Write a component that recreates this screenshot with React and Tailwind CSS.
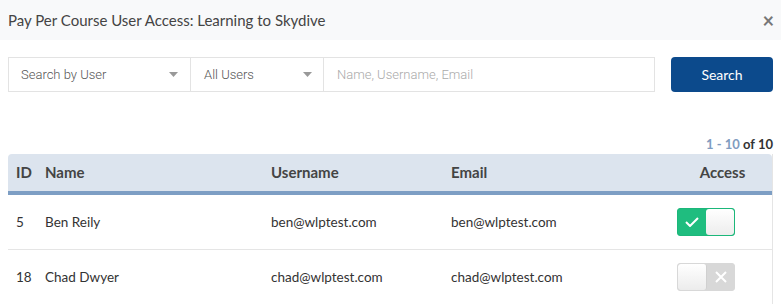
import { useState } from "react";

const users = [
  { id: 5, name: "Ben Reily", username: "ben@wlptest.com", email: "ben@wlptest.com", access: true },
  { id: 18, name: "Chad Dwyer", username: "chad@wlptest.com", email: "chad@wlptest.com", access: false },
];

function Caret() {
  return (
    <svg width="9" height="5" viewBox="0 0 9 5" className="fill-[#999]">
      <path d="M0 0h9L4.5 5z" />
    </svg>
  );
}

function Toggle({ on, onClick }) {
  return (
    <button
      onClick={onClick}
      className={`flex h-[28px] w-[58px] rounded-[3px] border overflow-hidden ${
        on ? "border-[#1cb77a] bg-[#1fbd7f]" : "border-[#d8d8d8] bg-[#d8d8d8]"
      }`}
    >
      {on ? (
        <>
          <span className="flex h-full w-[28px] items-center justify-center">
            <svg width="14" height="10" viewBox="0 0 14 10" fill="none" stroke="white" strokeWidth="2">
              <path d="M1 5l4 4 8-8" />
            </svg>
          </span>
          <span className="h-full flex-1 rounded-[3px] bg-gradient-to-b from-white to-[#ededed]" />
        </>
      ) : (
        <>
          <span className="h-full w-[29px] rounded-[3px] bg-gradient-to-b from-white to-[#ececec] border-r border-[#d0d0d0]" />
          <span className="flex h-full flex-1 items-center justify-center">
            <svg width="12" height="12" viewBox="0 0 12 12" stroke="white" strokeWidth="2">
              <path d="M1 1l10 10M11 1L1 11" />
            </svg>
          </span>
        </>
      )}
    </button>
  );
}

export default function App() {
  const [rows, setRows] = useState(users);

  // flip access for one user
  const toggleAccess = (id) => {
    setRows(rows.map((r) => (r.id === id ? { ...r, access: !r.access } : r)));
  };

  return (
    <div className="w-[781px] h-[304px] overflow-hidden bg-white font-['Lato',sans-serif] text-[#333]">
      <div className="flex h-[40px] items-center justify-between bg-[#f8f9fa] pl-[8px] pr-[7px]">
        <h2 className="text-[15px] text-[#444]">Pay Per Course User Access: Learning to Skydive</h2>
        <span className="text-[20px] font-bold leading-none text-[#777]">×</span>
      </div>

      <div className="mt-[17px] flex h-[35px] px-[8px]">
        <div className="flex w-[183px] items-center justify-between border border-[#e3e3e3] pl-[12px] pr-[12px] font-['Roboto',sans-serif] text-[13px] font-light text-[#555]">
          Search by User
          <Caret />
        </div>
        <div className="flex w-[133px] items-center justify-between border border-l-0 border-[#e3e3e3] pl-[13px] pr-[11px] font-['Roboto',sans-serif] text-[13px] font-light text-[#555]">
          All Users
          <Caret />
        </div>
        <input
          placeholder="Name, Username, Email"
          className="w-[331px] border border-l-0 border-[#e3e3e3] px-[13px] font-['Roboto',sans-serif] text-[13px] font-light placeholder-[#aaa] outline-none"
        />
        <button className="ml-[16px] w-[102px] rounded-[4px] bg-[#0c4a8c] text-[14px] text-white">
          Search
        </button>
      </div>

      <div className="mt-[44px] pr-[8px] text-right text-[13px] font-bold leading-[16px]">
        <span className="text-[#7f9cc0]">1 - 10</span> <span className="text-[#333]">of 10</span>
      </div>

      <div className="mx-[8px] mt-[2px] border-r border-[#e5e5e5]">
        <div className="flex h-[41px] items-center rounded-t-[4px] border-b-4 border-[#7d9ec4] bg-[#dce4ee] text-[15px] font-bold text-[#444]">
          <span className="w-[37px] pl-[8px]">ID</span>
          <span className="w-[226px]">Name</span>
          <span className="w-[180px]">Username</span>
          <span className="flex-1">Email</span>
          <span className="w-[99px] text-center">Access</span>
        </div>
        {rows.map((r) => (
          <div key={r.id} className="flex h-[55px] items-center border-b border-[#e5e5e5] text-[13.5px] text-[#333]">
            <span className="w-[37px] pl-[8px]">{r.id}</span>
            <span className="w-[226px]">{r.name}</span>
            <span className="w-[180px]">{r.username}</span>
            <span className="flex-1">{r.email}</span>
            <span className="flex w-[99px] justify-start pl-[4px]">
              <Toggle on={r.access} onClick={() => toggleAccess(r.id)} />
            </span>
          </div>
        ))}
      </div>
    </div>
  );
}
